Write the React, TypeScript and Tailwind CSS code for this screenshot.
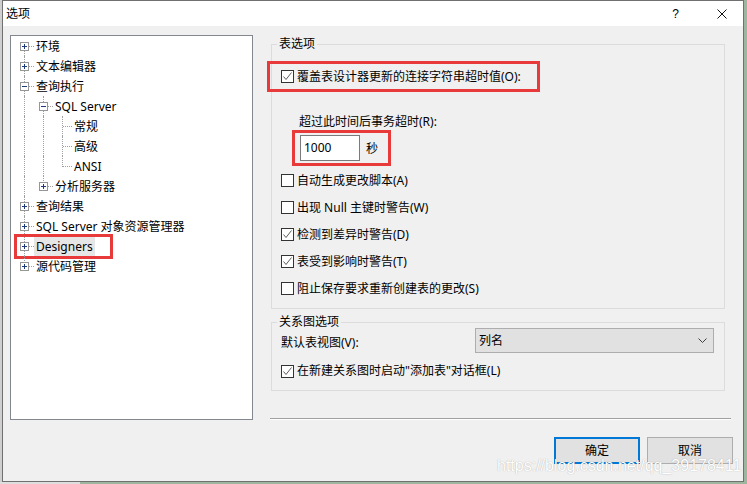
import React from 'react';

type Guide = 'full' | 'top' | 'bottom' | 'none';
type Cell = { v: Guide; h?: boolean; box?: '+' | '-' };
type Node = { label: string; cells: Cell[]; selected?: boolean };

const rootGuide: Cell = { v: 'full' };

const nodes: Node[] = [
  { label: '环境', cells: [{ v: 'bottom', h: true, box: '+' }] },
  { label: '文本编辑器', cells: [{ v: 'full', h: true, box: '+' }] },
  { label: '查询执行', cells: [{ v: 'full', h: true, box: '-' }] },
  { label: 'SQL Server', cells: [rootGuide, { v: 'full', h: true, box: '-' }] },
  { label: '常规', cells: [rootGuide, { v: 'full' }, { v: 'full', h: true }] },
  { label: '高级', cells: [rootGuide, { v: 'full' }, { v: 'full', h: true }] },
  { label: 'ANSI', cells: [rootGuide, { v: 'full' }, { v: 'top', h: true }] },
  { label: '分析服务器', cells: [rootGuide, { v: 'top', h: true, box: '+' }] },
  { label: '查询结果', cells: [{ v: 'full', h: true, box: '+' }] },
  { label: 'SQL Server 对象资源管理器', cells: [{ v: 'full', h: true, box: '+' }] },
  { label: 'Designers', cells: [{ v: 'full', h: true, box: '+' }], selected: true },
  { label: '源代码管理', cells: [{ v: 'top', h: true, box: '+' }] },
];

const tableOptions = [
  { label: '自动生成更改脚本(A)', checked: false },
  { label: '出现 Null 主键时警告(W)', checked: false },
  { label: '检测到差异时警告(D)', checked: true },
  { label: '表受到影响时警告(T)', checked: true },
  { label: '阻止保存要求重新创建表的更改(S)', checked: false },
];

function ExpandBox({ sign }: { sign: '+' | '-' }) {
  return (
    <svg className="absolute left-[5px] top-[6px]" width="9" height="9" viewBox="0 0 9 9">
      <rect x="0.5" y="0.5" width="8" height="8" fill="#fff" stroke="#969696" />
      <path d="M2 4.5h5" stroke="#1f3b7a" />
      {sign === '+' && <path d="M4.5 2v5" stroke="#1f3b7a" />}
    </svg>
  );
}

function GuideCell({ v, h, box }: Cell) {
  return (
    <div className="relative w-[19px] shrink-0">
      {v === 'full' && <div className="absolute left-[9px] top-0 bottom-0 border-l border-dotted border-[#a0a0a0]" />}
      {v === 'top' && <div className="absolute left-[9px] top-0 h-[11px] border-l border-dotted border-[#a0a0a0]" />}
      {v === 'bottom' && <div className="absolute left-[9px] top-[10px] bottom-0 border-l border-dotted border-[#a0a0a0]" />}
      {h && <div className="absolute left-[10px] right-0 top-[10px] border-t border-dotted border-[#a0a0a0]" />}
      {box && <ExpandBox sign={box} />}
    </div>
  );
}

function CheckBox({ checked }: { checked: boolean }) {
  return (
    <span className="flex w-[13px] h-[13px] shrink-0 items-center justify-center border border-[#333333] bg-white">
      {checked && (
        <svg width="11" height="11" viewBox="0 0 11 11">
          <path d="M1.5 5.5L4 8.5L9.5 1.5" fill="none" stroke="#5c5c5c" strokeWidth="1" />
        </svg>
      )}
    </span>
  );
}

function CheckRow({ label, checked }: { label: string; checked: boolean }) {
  return (
    <div className="flex h-[27px] items-center gap-[3px]">
      <CheckBox checked={checked} />
      <span className="leading-[16px]">{label}</span>
    </div>
  );
}

function Tree() {
  return (
    <div className="w-[243px] h-[385px] shrink-0 border border-[#828790] bg-white">
      {nodes.map((n) => (
        <div key={n.label} className="relative flex h-[20px] pl-[4px]">
          {n.cells.map((c, i) => (
            <GuideCell key={i} {...c} />
          ))}
          <span className={`h-[20px] px-[2px] pt-[2px] leading-[18px] whitespace-nowrap ${n.selected ? 'bg-[#e6e6e6]' : ''}`}>{n.label}</span>
          {n.selected && (
            <div className="absolute left-[3px] -top-[2px] w-[99px] h-[25px] border-[3px] border-[#e8393b]" />
          )}
        </div>
      ))}
    </div>
  );
}

export default function App() {
  return (
    <div className="flex flex-col w-[747px] h-[484px] overflow-hidden bg-[#9db69d] font-['Noto_Sans','Noto_Sans_CJK_SC',sans-serif] text-[12px] text-black">
      <div className="flex h-[482px]">
        <div className="w-[2px] bg-[#cfcfcf]" />
        {/* dialog window */}
        <div className="relative flex flex-col w-[742px] h-[482px] border border-[#707070] bg-[#f0f0f0]">
          <div className="flex h-[25px] items-center bg-white pl-[3px]">
            <span className="leading-[16px]">选项</span>
            <span className="ml-auto font-['Liberation_Sans',sans-serif] text-[12px] leading-[14px]">?</span>
            <svg className="ml-[38px] mr-[16px]" width="10" height="10" viewBox="0 0 10 10">
              <path d="M0.5 0.5L9.5 9.5M9.5 0.5L0.5 9.5" stroke="#111" strokeWidth="1" />
            </svg>
          </div>

          <div className="flex pl-[7px] pr-[10px] pt-[9px]">
            <Tree />

            <div className="flex flex-col w-[463px] ml-[17px] mt-[1px]">
              <fieldset className="ml-[1px] mr-[8px] border border-[#dcdcdc] px-0 pb-[6px]">
                <legend className="ml-[5px] px-[2px] leading-[16px]">表选项</legend>
                <div className="flex flex-col pl-[9px]">
                  <div className="-ml-[14px] mt-[9px] flex w-[273px] h-[31px] items-center gap-[3px] border-[3px] border-[#e8393b] pl-[11px]">
                    <CheckBox checked />
                    <span className="leading-[16px] whitespace-nowrap">覆盖表设计器更新的连接字符串超时值(O):</span>
                  </div>
                  <span className="mt-[22px] ml-[18px] leading-[16px]">超过此时间后事务超时(R):</span>
                  <div className="ml-[11px] flex w-[99px] h-[36px] items-start border-[3px] border-[#e8393b] pl-[5px] pt-[2px]">
                    <div className="flex w-[60px] h-[26px] items-center border border-[#7a7a7a] bg-white pl-[3px]">
                      <span className="leading-[16px]">1000</span>
                    </div>
                    <span className="ml-[6px] self-center leading-[16px]">秒</span>
                  </div>
                  <div className="mt-[1px] flex flex-col">
                    {tableOptions.map((o) => (
                      <CheckRow key={o.label} label={o.label} checked={o.checked} />
                    ))}
                  </div>
                </div>
              </fieldset>

              <fieldset className="ml-[1px] mr-[8px] mt-[6px] border border-[#dcdcdc] px-0 pb-[9px]">
                <legend className="ml-[5px] px-[2px] leading-[14px]">关系图选项</legend>
                <div className="flex flex-col pl-[9px]">
                  <div className="-mt-[1px] flex items-start">
                    <span className="w-[194px] mt-[7px] leading-[16px]">默认表视图(V):</span>
                    <div className="flex w-[239px] h-[25px] items-center justify-between border border-[#adadad] bg-[#e1e1e1] pl-[3px] pr-[6px]">
                      <span className="leading-[16px]">列名</span>
                      <svg width="9" height="5" viewBox="0 0 9 5">
                        <path d="M0.5 0.5L4.5 4.5L8.5 0.5" fill="none" stroke="#404040" strokeWidth="1" />
                      </svg>
                    </div>
                  </div>
                  <div className="mt-[8px] flex h-[20px] items-center gap-[3px]">
                    <CheckBox checked />
                    <span className="leading-[16px]">在新建关系图时启动"添加表"对话框(L)</span>
                  </div>
                </div>
              </fieldset>

              <div className="mt-[27px] mr-[2px] border-t border-b border-t-[#a0a0a0] border-b-white" />

              <div className="mt-[17px] flex justify-end gap-[7px]">
                <button className="w-[86px] h-[27px] border-2 border-[#0078d7] bg-[#e1e1e1] leading-[16px]">确定</button>
                <button className="w-[86px] h-[27px] border border-[#adadad] bg-[#e1e1e1] leading-[16px]">取消</button>
              </div>
            </div>
          </div>

          <span className="absolute left-[494px] top-[457px] font-['Liberation_Sans',sans-serif] text-[16px] leading-[16px] text-white [text-shadow:0_0_1px_rgba(0,0,0,0.35)] whitespace-nowrap">
            https://blog.csdn.net/qq_39178411
          </span>
        </div>
        <div className="w-[3px] bg-[#9db69d]" />
      </div>
      <div className="flex h-[2px]">
        <div className="w-[80px] bg-[#dedede]" />
      </div>
    </div>
  );
}
